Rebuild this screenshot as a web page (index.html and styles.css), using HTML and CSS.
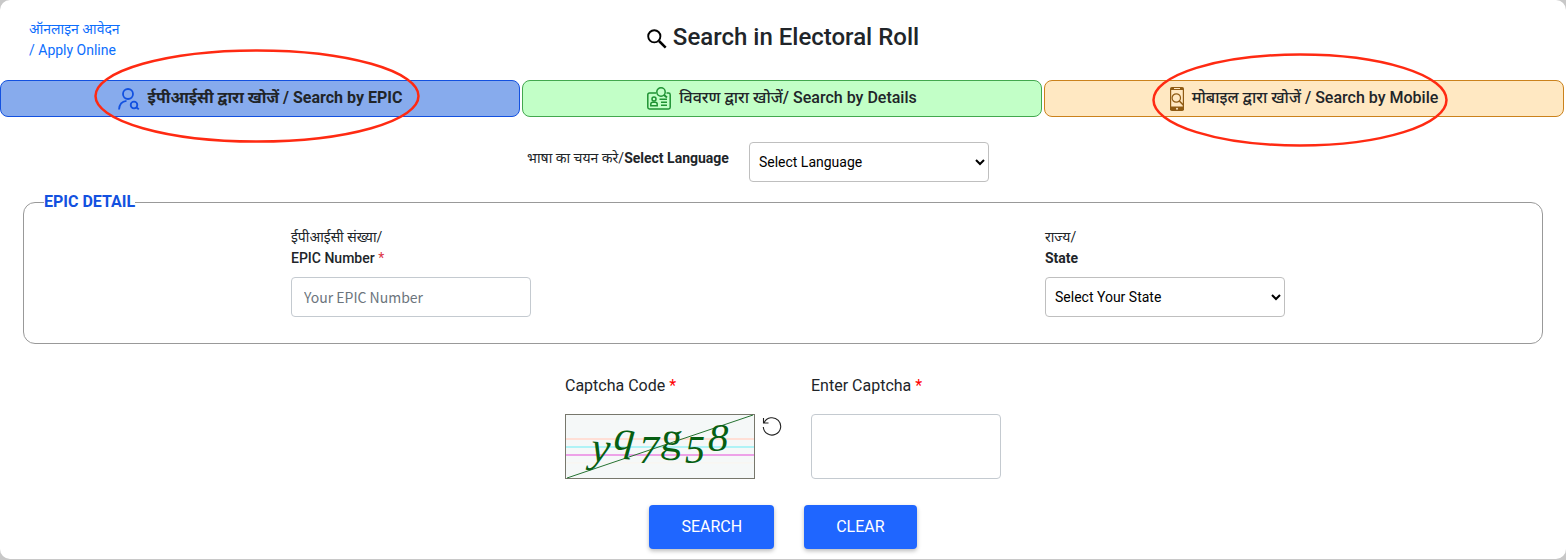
FILE: index.html
```html
<!DOCTYPE html>
<html lang="hi">
<head>
<meta charset="utf-8">
<title>Search in Electoral Roll</title>
<link rel="stylesheet" href="styles.css">
</head>
<body>
<main class="page">
  <header class="header">
    <a class="apply" href="#apply">ऑनलाइन आवेदन<br>/ Apply Online</a>
    <h1 class="title">
      <svg class="title-icon" viewBox="0 0 20 20" fill="none" stroke="#000" aria-hidden="true"><circle cx="7.3" cy="7.3" r="6.1" stroke-width="1.9"/><path d="M12 12l6.700 6.700" stroke-width="2.500"/></svg>
      Search in Electoral Roll
    </h1>
  </header>

  <nav class="tabs">
    <button class="tab tab-epic" type="button">
      <svg class="tab-icon" viewBox="0 0 22 22" fill="none" stroke="#1351e0" stroke-width="1.8" aria-hidden="true"><circle cx="10" cy="6" r="5"/><path d="M1 21.5c.3-5 3-8.200 7.500-8.700"/><circle cx="16" cy="17" r="3.300"/><path d="M18.500 19.500l2.300 1.800"/></svg>
      <span class="tab-text">ईपीआईसी द्वारा खोजें / Search by EPIC</span>
      <svg class="ring ring-epic" viewBox="0 0 326 94" preserveAspectRatio="none" fill="none" stroke="#ff2a12" stroke-width="2.500" aria-hidden="true"><ellipse cx="163" cy="47" rx="161.500" ry="45.500"/></svg>
    </button>
    <button class="tab tab-details" type="button">
      <svg class="tab-icon tab-icon-wide" viewBox="0 0 24 23" fill="none" stroke="#1f9233" stroke-width="1.500" aria-hidden="true"><path d="M9 6H2.500Q.8 6 .8 7.700v12.600Q.8 22 2.500 22h19q1.700 0 1.700-1.700V7.700Q23.200 6 21.500 6h-2"/><circle cx="14" cy="5" r="4.200"/><path d="M17 8l3 2.500" stroke-width="2"/><circle cx="7" cy="12" r="2"/><path d="M3.800 18.800v-1.500q0-2 2-2h2.400q2 0 2 2v1.500zM12.500 12.200h7.500M14 15.200h6M14 18.300h6"/></svg>
      <span class="tab-text">विवरण द्वारा खोजें/ Search by Details</span>
    </button>
    <button class="tab tab-mobile" type="button">
      <svg class="tab-icon tab-icon-phone" viewBox="0 0 14 24" fill="none" aria-hidden="true"><rect width="14" height="24" rx="1.800" fill="#8f5b14"/><path fill="#ffe8c2" d="M1.200 3h11.600v16.500H1.200zM4 1.100h6v.8H4z"/><circle cx="7" cy="21.700" r="1" fill="#ffe8c2"/><circle cx="6.300" cy="11" r="4.200" stroke="#8f5b14" stroke-width="1.200"/><path d="M9.300 14l4 4" stroke="#8f5b14" stroke-width="1.600"/></svg>
      <span class="tab-text">मोबाइल द्वारा खोजें / Search by Mobile</span>
      <svg class="ring ring-mobile" viewBox="0 0 296 94" preserveAspectRatio="none" fill="none" stroke="#ff2a12" stroke-width="2.500" aria-hidden="true"><ellipse cx="148" cy="47" rx="146.500" ry="45.500"/></svg>
    </button>
  </nav>

  <form class="form">
    <div class="language">
      <label class="label" for="language">भाषा का चयन करे/<b>Select Language</b></label>
      <select class="control select" id="language"><option>Select Language</option></select>
    </div>

    <fieldset class="epic">
      <legend class="legend">EPIC DETAIL</legend>
      <div class="fields">
        <div class="field">
          <label class="label" for="epic">ईपीआईसी संख्या/<br><span class="strong">EPIC Number</span> <span class="required-soft">*</span></label>
          <input class="control text" id="epic" type="text" placeholder="Your EPIC Number">
        </div>
        <div class="field">
          <label class="label" for="state">राज्य/<br><b>State</b></label>
          <select class="control select" id="state"><option>Select Your State</option></select>
        </div>
      </div>
    </fieldset>

    <div class="captcha">
      <div class="captcha-col">
        <div class="captcha-label">Captcha Code <span class="required">*</span></div>
        <div class="captcha-row">
          <svg class="captcha-image" viewBox="0 0 190 65" role="img" aria-label="Captcha">
            <rect x=".5" y=".5" width="189" height="64" fill="#f5f8f8" stroke="#77776c"/>
            <path d="M1 25h188" stroke="#ffdfd6" stroke-width="2"/>
            <path d="M1 33h188" stroke="#b0f3f6" stroke-width="2"/>
            <path d="M1 41h188" stroke="#eda2e8" stroke-width="2"/>
            <path d="M1 49h188" stroke="#fbf5ed"/>
            <path d="M2 64L188 1" stroke="#267332"/>
            <g class="captcha-text">
              <text x="25" y="47" font-size="43" transform="rotate(5 25 47)">y</text>
              <text x="48" y="35" font-size="42" transform="rotate(5 48 35)">q</text>
              <text x="74" y="49" font-size="40">7</text>
              <text class="upright" x="95" y="36" font-size="42" transform="rotate(7 95 36)">g</text>
              <text x="120" y="49" font-size="40">5</text>
              <text x="143" y="37" font-size="41">8</text>
            </g>
          </svg>
          <button class="refresh" type="button" aria-label="Refresh captcha"><svg viewBox="0 0 20 20" fill="none" stroke="#222" stroke-width="1.100" aria-hidden="true"><path d="M2.200 6.500A8.700 8.700 0 1 1 1.300 11M1.500 2v5h5"/></svg></button>
        </div>
      </div>
      <div class="captcha-col">
        <label class="captcha-label" for="captcha">Enter Captcha <span class="required">*</span></label>
        <input class="control captcha-input" id="captcha" type="text">
      </div>
    </div>

    <div class="actions">
      <button class="action" type="button">SEARCH</button>
      <button class="action" type="reset">CLEAR</button>
    </div>
  </form>
</main>
</body>
</html>
```
FILE: styles.css
```css
* { box-sizing: border-box; }

body {
  margin: 0;
  background: #c8c8c8;
  color: #212529;
  font: 16px/24px Roboto, "Noto Sans", sans-serif;
}

button, input, select { font: inherit; }

.page {
  margin-bottom: 1px;
  padding-bottom: 10px;
  background: #fff;
  border-radius: 10px;
}

.header {
  display: grid;
  grid-template-columns: 1fr auto 1fr;
  padding: 19px 29px;
}

.apply {
  color: #0d6efd;
  font-size: 14px;
  line-height: 21px;
  text-decoration: none;
}

.title {
  display: flex;
  gap: 6px;
  margin: 0;
  font-size: 24px;
  font-weight: 500;
  line-height: 36px;
}

.title-icon {
  width: 20px;
  height: 20px;
  margin-top: 10px;
}

.tabs {
  display: grid;
  grid-template-columns: repeat(3, 1fr);
  gap: 2px;
  margin-right: 2px;
}

.tab {
  position: relative;
  display: flex;
  align-items: center;
  justify-content: center;
  gap: 8px;
  height: 37px;
  padding: 0;
  border: 1px solid;
  border-radius: 8px;
  color: #212529;
  font-weight: 500;
}

.tab-epic { background: #87abed; border-color: #1351e0; font-weight: 700; }
.tab-details { background: #c2ffc7; border-color: #42a84e; }
.tab-mobile { background: #ffe8c2; border-color: #cb821c; }

.tab-icon { width: 22px; height: 22px; }
.tab-icon-wide { width: 24px; height: 23px; }
.tab-icon-phone { width: 14px; height: 24px; }
.tab-text { padding-bottom: 2px; }

.ring {
  position: absolute;
  z-index: 1;
  height: 94px;
  pointer-events: none;
}

.ring-epic { top: -32px; left: calc(50% - 166px); width: 326px; }
.ring-mobile { top: -28px; left: calc(50% - 152px); width: 296px; }

.language {
  display: flex;
  justify-content: center;
  gap: 20px;
  padding: 25px 50px 0 0;
}

.language .label { padding-top: 6px; }

.label {
  font-size: 14px;
  line-height: 21px;
}

.strong { font-weight: 500; }
.required { color: #f00; }
.required-soft { color: #dc3545; }

.control {
  width: 240px;
  height: 40px;
  background: #fff;
  border: 1px solid #c4cad0;
  border-radius: 4px;
}

.select {
  padding: 0 5px;
  border-color: #bfbfbf;
  color: #000;
  font-size: 14px;
}

.text {
  padding: 0 12px;
  font-family: "Noto Sans CJK SC", sans-serif;
  font-size: 14px;
}

.text::placeholder { color: #6c757d; }

.epic {
  margin: 8px 23px 0;
  padding: 13px 0 26px 10px;
  border: 1px solid #999;
  border-radius: 12px;
}

.legend {
  margin-left: 10px;
  padding: 0;
  color: #1351e0;
  font-weight: 700;
}

.fields {
  display: flex;
  justify-content: space-around;
}

.field {
  display: flex;
  flex-direction: column;
  gap: 8px;
}

.captcha {
  display: flex;
  justify-content: center;
  gap: 29px;
  margin-top: 30px;
}

.captcha-col {
  display: flex;
  flex-direction: column;
  gap: 16px;
}

.captcha-row {
  display: flex;
  align-items: flex-start;
  gap: 7px;
}

.captcha-image { width: 190px; height: 65px; }
.captcha-text { fill: #075f12; font-family: "Liberation Serif", serif; font-style: italic; }
.upright { font-style: normal; }

.refresh {
  display: flex;
  width: 20px;
  margin-top: 2px;
  padding: 0;
  background: none;
  border: 0;
}

.captcha-input { width: 190px; height: 65px; padding: 0 12px; }

.actions {
  display: flex;
  justify-content: center;
  gap: 30px;
  margin-top: 26px;
}

.action {
  height: 44px;
  padding: 0 32px;
  background: #1f66ff;
  border: 0;
  border-radius: 4px;
  box-shadow: 0 2px 4px #0004;
  color: #fff;
}
```
